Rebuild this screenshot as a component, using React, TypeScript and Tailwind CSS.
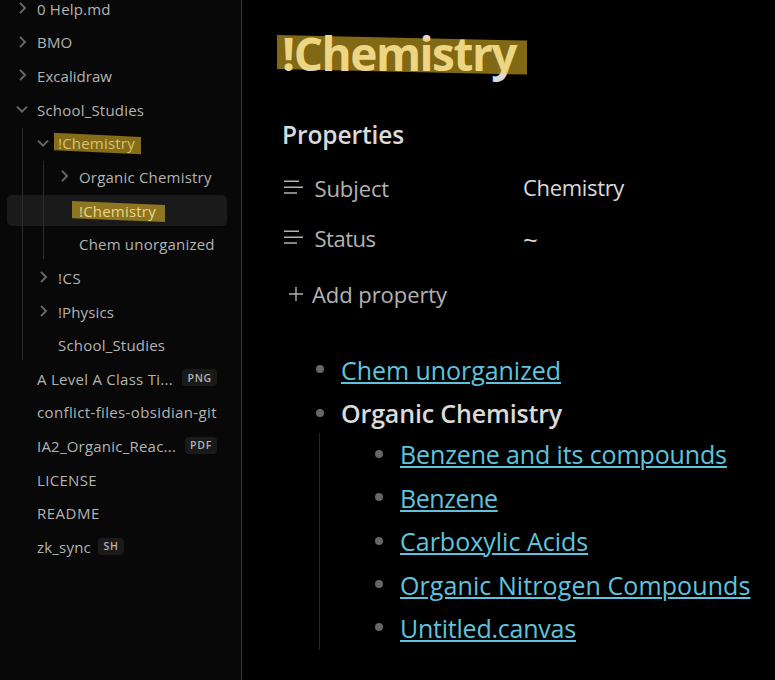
import type { ReactNode } from "react";

type Kind = "open" | "closed" | "none";

function Chevron({ kind }: { kind: Kind }) {
  if (kind === "none") return null;
  return (
    <svg className="absolute left-[-22px] top-[8px] h-[14px] w-[14px]" viewBox="0 0 14 14" fill="none" stroke="#666666" strokeWidth="2">
      {kind === "closed" ? <path d="M5 1.9 10 7 5 12.1" /> : <path d="M2 4.6 7 9.6 12 4.6" />}
    </svg>
  );
}

function Row({
  label,
  kind = "none",
  indent = "pl-[30px]",
  track = "tracking-[0.2px]",
  badge,
  active = false,
  mark,
}: {
  label: string;
  kind?: Kind;
  indent?: string;
  track?: string;
  badge?: string;
  active?: boolean;
  mark?: string;
}) {
  return (
    <div className={`mb-[2.67px] ml-[7px] flex h-[31px] w-[220px] items-center rounded-[5px] ${indent} ${active ? "bg-[#1a1a1a]" : ""}`}>
      <div className="relative flex h-[31px] items-center">
        <Chevron kind={kind} />
        <span className={`whitespace-nowrap pt-[0.2px] ${track} ${active ? "text-[#dadada]" : "text-[#b3b3b3]"}`}>{label}</span>
        {mark && <i className={`absolute bg-[#ffd028]/50 ${mark}`} />}
      </div>
      {badge && (
        <span className={`mt-[-1.5px] flex h-[17px] items-center rounded-[4px] bg-[#1a1a1a] pl-[5.5px] pr-[5px] text-[10.5px] font-semibold tracking-[0.75px] text-[#b3b3b3] ${badge === "SH" ? "ml-[7px]" : "ml-auto mr-[10px]"}`}>
          {badge}
        </span>
      )}
    </div>
  );
}

function Sidebar() {
  return (
    <aside className="h-[680px] w-[242px] shrink-0 overflow-hidden border-r border-[#363636] bg-[#080808] text-[15px] leading-[20px]">
      <div className="-mt-[7px]">
        <Row label="0 Help.md" kind="closed" />
        <Row label="BMO" kind="closed" />
        <Row label="Excalidraw" kind="closed" track="tracking-[0.05px]" />
        <Row label="School_Studies" kind="open" />
        <div className="relative">
          <Row
            label="!Chemistry"
            kind="open"
            indent="pl-[51px]"
            mark="left-[-4px] top-[5px] h-[22px] w-[87px] [clip-path:polygon(0_0,100%_20%,100%_98%,0_80%)]"
          />
          <div className="relative">
            <Row label="Organic Chemistry" kind="closed" indent="pl-[72px]" />
            <Row
              label="!Chemistry"
              active
              indent="pl-[72px]"
              mark="left-[-7px] top-[6px] h-[21px] w-[93px] [clip-path:polygon(0_0,100%_19%,100%_100%,0_82%)]"
            />
            <Row label="Chem unorganized" indent="pl-[72px]" />
            <i className="absolute bottom-[1px] left-[43px] top-0 w-px bg-[#2c2c2c]" />
          </div>
          <Row label="!CS" kind="closed" indent="pl-[51px]" track="tracking-[0.6px]" />
          <Row label="!Physics" kind="closed" indent="pl-[51px]" track="tracking-[0.13px]" />
          <Row label="School_Studies" indent="pl-[51px]" />
          <i className="absolute bottom-[1px] left-[22px] top-0 w-px bg-[#2c2c2c]" />
        </div>
        <Row label="A Level A Class Ti..." badge="PNG" track="tracking-[0.27px]" />
        <Row label="conflict-files-obsidian-git" track="tracking-[0.36px]" />
        <Row label="IA2_Organic_Reac..." badge="PDF" track="tracking-[0.22px]" />
        <Row label="LICENSE" track="tracking-[0.33px]" />
        <Row label="README" track="tracking-[0.5px]" />
        <Row label="zk_sync" badge="SH" />
      </div>
    </aside>
  );
}

function TextIcon() {
  return (
    <svg className="h-[20px] w-[24px] shrink-0" viewBox="0 0 24 20" fill="none" stroke="#b3b3b3" strokeWidth="1.5">
      <path d="M2 4.2h15M2 10.2h19M2 16h13" />
    </svg>
  );
}

function Property({ name, value, track, valueTrack }: { name: string; value: string; track: string; valueTrack: string }) {
  return (
    <div className="flex h-[50px] items-center">
      <TextIcon />
      <span className={`w-[209px] pl-[8.5px] pt-[2px] text-[#b3b3b3] ${track}`}>{name}</span>
      <span className={`pl-[8px] text-[#dadada] ${valueTrack}`}>{value}</span>
    </div>
  );
}

function Item({ children, track = "", bold = false }: { children: ReactNode; track?: string; bold?: boolean }) {
  return (
    <li className="flex h-[43.4px] items-center">
      <i className="mr-[17px] mt-[-1px] h-[8px] w-[8px] shrink-0 rounded-full bg-[#666666]" />
      {bold ? (
        <strong className={`whitespace-nowrap font-semibold text-[#dadada] ${track}`}>{children}</strong>
      ) : (
        <a className={`whitespace-nowrap text-[#5fc3de] underline decoration-2 underline-offset-[2px] ${track}`}>{children}</a>
      )}
    </li>
  );
}

export default function App() {
  return (
    <div className="flex h-[680px] w-[775px] overflow-hidden bg-black font-['Open_Sans','Noto_Sans',sans-serif]">
      <Sidebar />
      <main className="flex-1 pl-[40px] text-[22px] leading-[30px]">
        <div className="relative mt-[22px] h-[60px] w-[240px]">
          <h1 className="pt-[1px] text-[46px] font-bold leading-[60px] tracking-[-1.5px] text-[#dadada]">!Chemistry</h1>
          <i className="absolute left-[-5px] top-[13px] h-[40px] w-[250px] bg-[#ffd028]/50 [clip-path:polygon(0_0,100%_14%,100%_99%,0_85%)]" />
        </div>
        <h2 className="mt-[38px] h-[30px] text-[24.5px] font-semibold leading-[30px] tracking-[-0.1px] text-[#dadada]">Properties</h2>
        <div className="mt-[12px]">
          <Property name="Subject" value="Chemistry" track="tracking-[-0.1px]" valueTrack="tracking-[-0.33px]" />
          <Property name="Status" value="~" track="tracking-[-0.5px]" valueTrack="text-[26px] font-medium pt-[3px]" />
        </div>
        <div className="mt-[17px] flex h-[30px] items-center text-[#b3b3b3]">
          <svg className="ml-[6px] mr-[8px] h-[16px] w-[16px]" viewBox="0 0 16 16" fill="none" stroke="#b3b3b3" strokeWidth="1.4">
            <path d="M1 8h14M8 1v14" />
          </svg>
          <span className="tracking-[-0.07px]">Add property</span>
        </div>
        <ul className="mt-[39.2px] pl-[34px] text-[25px] leading-[40px]">
          <Item track="tracking-[-0.05px]">Chem unorganized</Item>
          <Item bold track="tracking-[-0.16px]">Organic Chemistry</Item>
          <li className="relative mt-[-2.3px]">
            <ul className="pl-[59px]">
              <Item track="tracking-[-0.13px]">Benzene and its compounds</Item>
              <Item track="tracking-[-0.42px]">Benzene</Item>
              <Item>Carboxylic Acids</Item>
              <Item track="tracking-[0.09px]">Organic Nitrogen Compounds</Item>
              <Item track="tracking-[-0.23px]">Untitled.canvas</Item>
            </ul>
            <i className="absolute bottom-0 left-[3px] top-0 w-px bg-[#262626]" />
          </li>
        </ul>
      </main>
    </div>
  );
}
